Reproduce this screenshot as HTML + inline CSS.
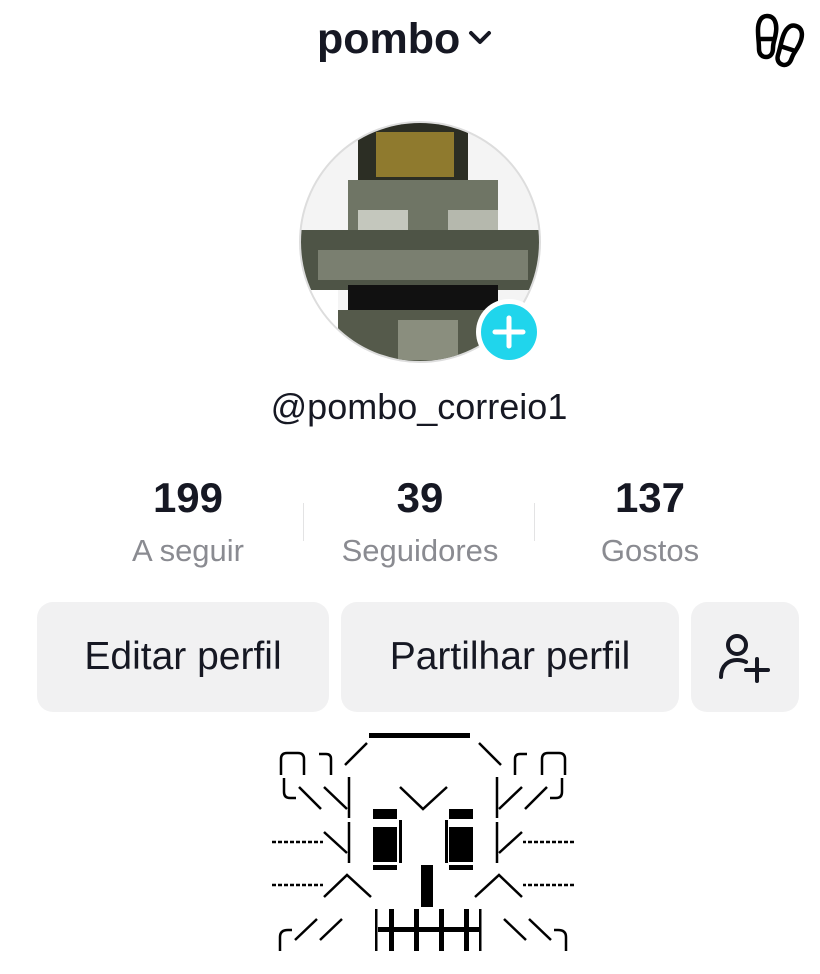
<!DOCTYPE html>
<html><head><meta charset="utf-8"><style>
body{margin:0;width:820px;height:974px;background:#fff;font-family:"Liberation Sans",sans-serif;position:relative;overflow:hidden;color:#161823}
.a{position:absolute}
.btn{position:absolute;top:602px;height:110px;background:#f1f1f2;border-radius:16px;display:flex;align-items:center;justify-content:center;font-size:39px;font-weight:500}
.num{position:absolute;top:474px;width:200px;text-align:center;font-size:42px;font-weight:bold}
.lab{position:absolute;top:533px;width:240px;text-align:center;font-size:31px;color:#8a8b91}
</style></head><body>
<div class="a" style="left:317px;top:15px;font-size:43px;font-weight:bold">pombo</div>
<svg class="a" style="left:466px;top:28px" width="30" height="20"><path d="M5 5 L14 14 L23 5" stroke="#161823" stroke-width="4" fill="none" stroke-linecap="round" stroke-linejoin="round"/></svg>
<svg class="a" style="left:750px;top:12px" width="56" height="56" viewBox="0 0 56 56">
<path d="M17 4 C25 4 27 12 26 20 C25 28 23 30 23 36 C23 42 20 45 16 45 C12 45 9 42 9 37 C9 30 8 26 8 18 C8 10 11 4 17 4 Z" stroke="#000" stroke-width="4.5" fill="none"/><path d="M8.5 27 H25" stroke="#000" stroke-width="4.5"/>
<g transform="rotate(18 40 32)"><path d="M40 13 C48 13 50 21 49 29 C48 37 46 39 46 45 C46 51 43 54 39 54 C35 54 32 51 32 46 C32 39 31 35 31 27 C31 19 34 13 40 13 Z" stroke="#000" stroke-width="4.5" fill="none"/><path d="M31.5 37 H48" stroke="#000" stroke-width="4.5"/></g>
</svg>
<svg class="a" style="left:298px;top:120px" width="250" height="250">
<defs><clipPath id="c"><circle cx="122" cy="122" r="119"/></clipPath></defs>
<circle cx="122" cy="122" r="120" fill="#f4f4f4" stroke="#ddd" stroke-width="2"/>
<g clip-path="url(#c)">
<rect x="60" y="0" width="110" height="70" fill="#2c2e24"/>
<rect x="78" y="12" width="78" height="45" fill="#8f7a2e"/>
<rect x="50" y="60" width="150" height="70" fill="#6f7565"/>
<rect x="60" y="90" width="50" height="30" fill="#c4c7bd"/>
<rect x="150" y="90" width="50" height="30" fill="#b5b8ad"/>
<rect x="0" y="110" width="245" height="60" fill="#4e5446"/>
<rect x="20" y="130" width="210" height="30" fill="#7a7f70"/>
<rect x="50" y="165" width="150" height="25" fill="#111"/>
<rect x="40" y="190" width="170" height="60" fill="#555a4b"/>
<rect x="100" y="200" width="60" height="40" fill="#8a8e7e"/>
<rect x="0" y="170" width="40" height="80" fill="#fff"/>
</g>
<circle cx="211" cy="212" r="33" fill="#fff"/><circle cx="211" cy="212" r="28" fill="#20d5ec"/>
<path d="M211 198 V226 M197 212 H225" stroke="#fff" stroke-width="5" stroke-linecap="round"/>
</svg>
<div class="a" style="left:0;width:838px;top:386px;text-align:center;font-size:36px">@pombo_correio1</div>
<div class="num" style="left:88px">199</div><div class="lab" style="left:68px">A seguir</div>
<div class="num" style="left:320px">39</div><div class="lab" style="left:300px">Seguidores</div>
<div class="num" style="left:550px">137</div><div class="lab" style="left:530px">Gostos</div>
<div class="a" style="left:303px;top:503px;width:1px;height:38px;background:#e3e3e4"></div>
<div class="a" style="left:534px;top:503px;width:1px;height:38px;background:#e3e3e4"></div>
<div class="btn" style="left:37px;width:292px">Editar perfil</div>
<div class="btn" style="left:341px;width:338px">Partilhar perfil</div>
<div class="btn" style="left:691px;width:108px"><svg width="60" height="60" viewBox="0 0 60 60"><circle cx="22" cy="18" r="9" stroke="#161823" stroke-width="4" fill="none"/><path d="M6 50 C6 38 14 33 22 33 C26 33 29 34 31 35" stroke="#161823" stroke-width="4" fill="none" stroke-linecap="round"/><path d="M42 32 V54 M31 43 H53" stroke="#161823" stroke-width="4" stroke-linecap="round"/></svg></div>
<svg class="a" style="left:0;top:720px" width="820" height="254">
<g transform="translate(0,-720)" stroke="#000" fill="none" stroke-width="2.5">
<rect x="369" y="733" width="101" height="5" fill="#000" stroke="none"/>
<g id="L">
<path d="M345 765 L367 743"/>
<path d="M281 775 V759 Q281 753 287 753 H298 Q304 753 304 759 V775"/>
<path d="M319 754 H326 Q331 754 331 759 V775"/>
<path d="M284 778 V792 Q284 798 290 798 H296"/>
<path d="M299 787 L321 809 M324 787 L347 809 M324 832 L347 853"/>
<path d="M349 777 V818 M349 822 V863"/>
<path d="M272 842 H323 M272 885 H323" stroke-dasharray="4 2"/>
<path d="M324 897 L347 875 L371 897"/>
<path d="M295 940 L317 919 M320 940 L342 919"/>
<path d="M280 951 V937 Q280 930 288 930 H292"/>
</g>
<use href="#L" transform="matrix(-1 0 0 1 846 0)"/>
<path d="M400 787 L423 809 L447 787"/>
<g fill="#000" stroke="none">
<rect x="373" y="809" width="24" height="10"/><rect x="373" y="827" width="24" height="35"/><rect x="373" y="865" width="24" height="5"/><rect x="399" y="820" width="3" height="43"/>
<rect x="449" y="809" width="24" height="10"/><rect x="449" y="827" width="24" height="35"/><rect x="449" y="865" width="24" height="5"/><rect x="445" y="820" width="3" height="43"/>
<rect x="421" y="865" width="12" height="42"/>
<rect x="378" y="927" width="102" height="5"/>
<rect x="375" y="909" width="2.5" height="42"/><rect x="389" y="909" width="5" height="42"/><rect x="414" y="909" width="5" height="42"/><rect x="439" y="909" width="5" height="42"/><rect x="464" y="909" width="5" height="42"/><rect x="479" y="909" width="2.5" height="42"/>
</g></g></svg>
</body></html>
